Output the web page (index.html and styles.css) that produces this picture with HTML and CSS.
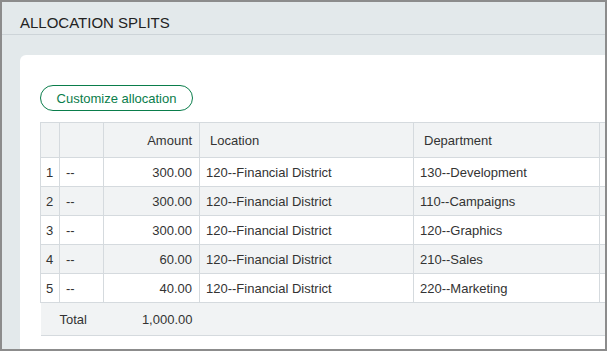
FILE: index.html
```html
<!DOCTYPE html>
<html lang="en">
<head>
  <meta charset="UTF-8" />
  <title>Allocation splits</title>
  <link rel="stylesheet" href="styles.css">
</head>
<body>
  <div class="frame">
    <div class="page-header">
      <h1 class="page-title">ALLOCATION SPLITS</h1>
    </div>

    <div class="content">
      <div class="card">
        <button class="btn-outline">Customize allocation</button>

        <table class="splits">
          <colgroup>
            <col class="c-num">
            <col class="c-id">
            <col class="c-amount">
            <col class="c-loc">
            <col class="c-dept">
            <col class="c-rest">
          </colgroup>
          <thead>
            <tr>
              <th></th>
              <th></th>
              <th class="right">Amount</th>
              <th>Location</th>
              <th>Department</th>
              <th></th>
            </tr>
          </thead>
          <tbody>
            <tr>
              <td class="num">1</td><td>--</td><td class="right">300.00</td>
              <td>120--Financial District</td><td>130--Development</td><td></td>
            </tr>
            <tr>
              <td class="num">2</td><td>--</td><td class="right">300.00</td>
              <td>120--Financial District</td><td>110--Campaigns</td><td></td>
            </tr>
            <tr>
              <td class="num">3</td><td>--</td><td class="right">300.00</td>
              <td>120--Financial District</td><td>120--Graphics</td><td></td>
            </tr>
            <tr>
              <td class="num">4</td><td>--</td><td class="right">60.00</td>
              <td>120--Financial District</td><td>210--Sales</td><td></td>
            </tr>
            <tr>
              <td class="num">5</td><td>--</td><td class="right">40.00</td>
              <td>120--Financial District</td><td>220--Marketing</td><td></td>
            </tr>
          </tbody>
          <tfoot>
            <tr>
              <td></td>
              <td class="total-label">Total</td>
              <td class="right">1,000.00</td>
              <td></td><td></td><td></td>
            </tr>
          </tfoot>
        </table>
      </div>
    </div>
  </div>
</body>
</html>
```

FILE: styles.css
```css
* {
  box-sizing: border-box;
  margin: 0;
  padding: 0;
}

body {
  font-family: 'Liberation Sans', Arial, sans-serif;
  color: #333;
  background: #fff;
}

.frame {
  width: 607px;
  height: 351px;
  border: 2px solid #8c8c8c;
  background: #e3e9eb;
  display: flex;
  flex-direction: column;
  overflow: hidden;
}

.page-header {
  height: 33px;
  padding: 0 0 3px 18px;
  border-bottom: 1px solid #cdd4d8;
  display: flex;
  align-items: flex-end;
}

.page-title {
  font-size: 15px;
  font-weight: 400;
  color: #222;
}

.content {
  flex: 1;
  padding: 20px 0 0 18px;
  display: flex;
}

.card {
  flex: 1;
  background: #fff;
  border-radius: 6px 0 0 0;
  padding: 30px 0 0 20px;
  overflow: hidden;
}

.btn-outline {
  display: block;
  height: 26px;
  width: 153px;
  border: 1px solid #0a7d4b;
  border-radius: 13px;
  background: #fff;
  color: #0a7d4b;
  font-family: inherit;
  font-size: 13px;
}

.splits {
  margin-top: 11px;
  width: 660px;
  table-layout: fixed;
  border-collapse: collapse;
  font-size: 13px;
}

.c-num { width: 19px; }
.c-id { width: 44px; }
.c-amount { width: 96px; }
.c-loc { width: 214px; }
.c-dept { width: 186px; }

.splits th,
.splits td {
  border: 1px solid #d5dade;
  text-align: left;
  white-space: nowrap;
}

.splits th {
  height: 35px;
  background: #f1f3f4;
  font-weight: 400;
  padding: 0 10px;
}

.splits td {
  height: 29px;
  padding: 0 6px;
}

.splits .right {
  text-align: right;
  padding-right: 7px;
}

.splits .num {
  padding: 0 0 0 5px;
}

.splits tbody tr:nth-child(even) td {
  background: #f1f3f4;
}

.splits tfoot td {
  height: 33px;
  background: #f1f3f4;
  border-left: none;
  border-right: none;
}

.splits .total-label {
  padding-left: 0;
}
```
